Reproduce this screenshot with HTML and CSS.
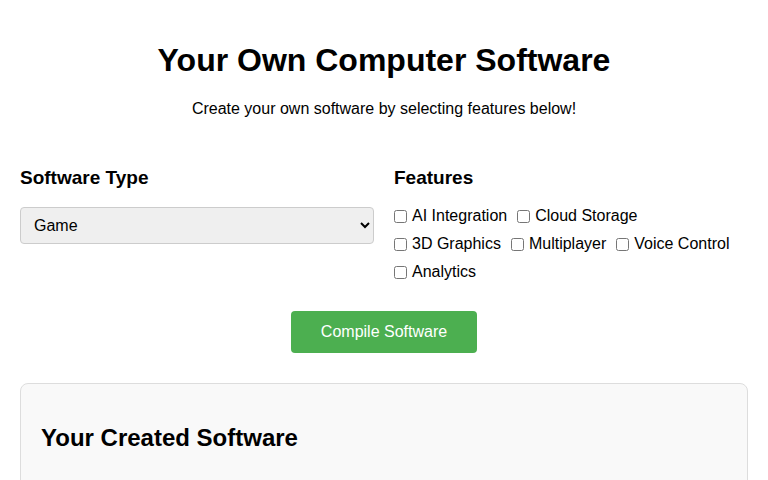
FILE: index.html
```html
<!DOCTYPE html>
<html>
  <head>
    <title>Your Own Computer Software</title>
    <link rel="stylesheet" href="styles.css">
  </head>
  <body>
    <div class="container">
      <h1 class="title">Your Own Computer Software</h1>
      <p class="subtitle">Create your own software by selecting features below!</p>

      <div class="options">
        <div class="option-group">
          <h3>Software Type</h3>
          <select class="type-select">
            <option>Game</option>
            <option>Productivity</option>
            <option>Education</option>
            <option>Utility</option>
          </select>
        </div>

        <div class="option-group">
          <h3>Features</h3>
          <div class="feature-list">
            <label class="feature"><input type="checkbox" value="ai">AI Integration</label>
            <label class="feature"><input type="checkbox" value="cloud">Cloud Storage</label>
            <label class="feature"><input type="checkbox" value="3d">3D Graphics</label>
            <label class="feature"><input type="checkbox" value="multiplayer">Multiplayer</label>
            <label class="feature"><input type="checkbox" value="voice">Voice Control</label>
            <label class="feature"><input type="checkbox" value="analytics">Analytics</label>
          </div>
        </div>
      </div>

      <div class="actions">
        <button class="compile-button">Compile Software</button>
      </div>

      <div class="result">
        <h2>Your Created Software</h2>
        <div class="result-output"></div>
      </div>
    </div>
  </body>
</html>
```

FILE: styles.css
```css
body {
  margin: 0;
  font-family: "Liberation Sans", Arial, sans-serif;
  color: #000;
  background-color: white;
}

.container {
  padding: 20px;
}

.title {
  text-align: center;
  font-size: 32px;
  margin: 22px 0 21px;
}

.subtitle {
  text-align: center;
  font-size: 16px;
  margin: 0 0 31px;
}

.options {
  display: grid;
  grid-template-columns: 1fr 1fr;
  gap: 20px;
}

.option-group h3 {
  font-size: 19px;
  margin: 18px 0 18px;
}

.type-select {
  width: 100%;
  padding: 8px 9px;
  font-family: "Liberation Sans", Arial, sans-serif;
  font-size: 16px;
  background-color: #efefef;
  border: 1px solid #ccc;
  border-radius: 4px;
  color: #000;
}

.feature-list {
  display: flex;
  flex-wrap: wrap;
  column-gap: 10px;
  row-gap: 10px;
  margin-top: 1px;
}

.feature {
  display: flex;
  align-items: center;
  font-size: 16px;
  line-height: 18px;
}

.feature input {
  margin: 0 5px 0 0;
  width: 13px;
  height: 13px;
}

.actions {
  text-align: center;
  margin-top: 30px;
}

.compile-button {
  background-color: #4caf50;
  color: white;
  border: none;
  border-radius: 4px;
  padding: 12px 30px;
  font-family: "Liberation Sans", Arial, sans-serif;
  font-size: 16px;
  cursor: pointer;
}

.result {
  margin-top: 30px;
  background-color: #f9f9f9;
  border: 1px solid #ddd;
  border-radius: 8px;
  padding: 20px;
  min-height: 200px;
}

.result h2 {
  font-size: 24px;
  margin: 20px 0;
}
```
